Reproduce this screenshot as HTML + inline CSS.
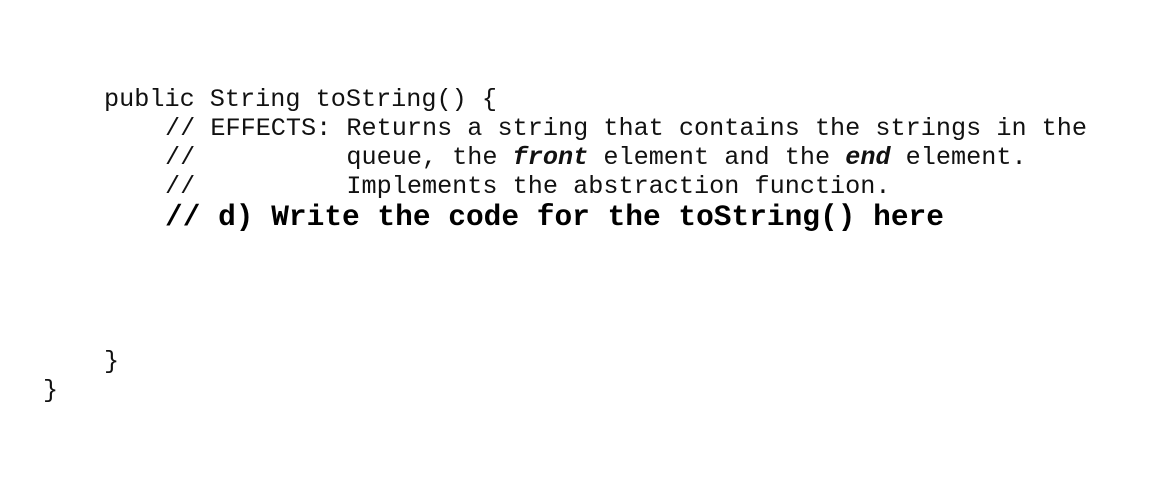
<!DOCTYPE html>
<html><head><meta charset="utf-8"><style>
html,body{margin:0;padding:0;background:#fff;width:1152px;height:482px;overflow:hidden}
.l{position:absolute;font-family:"Liberation Mono","Courier New",monospace;font-size:25.2px;line-height:29px;white-space:pre;color:#111}
.b{font-weight:bold;font-size:29.5px;line-height:34px;color:#000}
</style></head><body>
<div class="l" style="left:104px;top:85px">public String toString() {</div>
<div class="l" style="left:165px;top:114px">// EFFECTS: Returns a string that contains the strings in the</div>
<div class="l" style="left:165px;top:143px">//          queue, the <b><i>front</i></b> element and the <b><i>end</i></b> element.</div>
<div class="l" style="left:165px;top:172px">//          Implements the abstraction function.</div>
<div class="l b" style="left:165px;top:200px">// d) Write the code for the toString() here</div>
<div class="l" style="left:104px;top:347px">}</div>
<div class="l" style="left:43px;top:376px">}</div>
</body></html>
